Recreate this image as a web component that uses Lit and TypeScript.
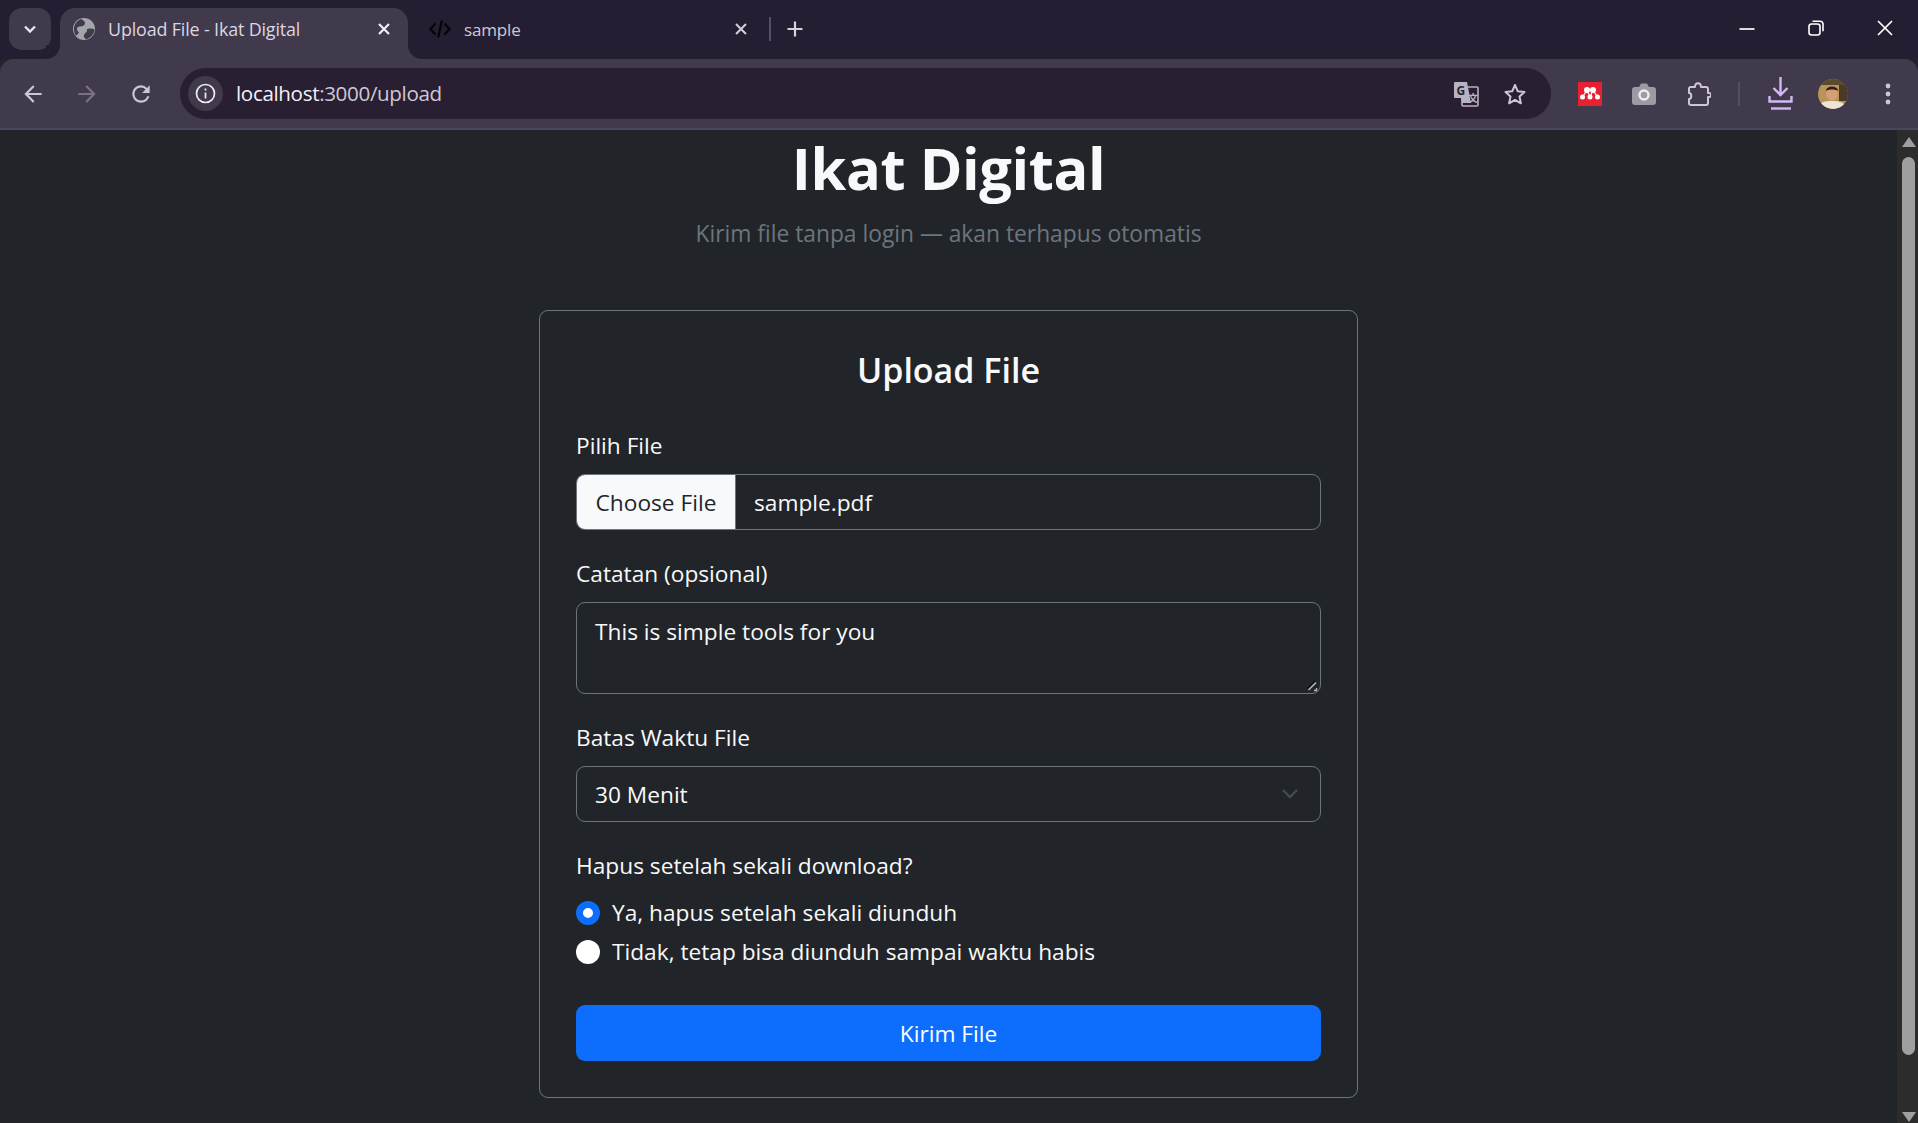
import { LitElement, html, css } from "lit";
import { customElement } from "lit/decorators.js";

const ic = (d: string, fill: string, size = 24) => html`<svg width=${size} height=${size} viewBox="0 0 24 24" fill=${fill}><path d=${d}></path></svg>`;

@customElement("app-root")
export class AppRoot extends LitElement {
  static styles = css`
    :host { display: flex; flex-direction: column; width: 100%; height: 1123px; overflow: hidden; background: #212529; font-family: "Open Sans", "Noto Sans", sans-serif; }
    svg { display: block; flex: none; }
    .strip { height: 59px; flex: none; background: #251d31; display: flex; align-items: flex-start; padding-left: 9px; box-sizing: border-box; color: #e6e1ea; }
    .tabmenu { width: 42px; height: 42px; margin-top: 8px; border-radius: 13px; background: #41394c; display: flex; align-items: center; justify-content: center; }
    .tab { height: 51px; margin-top: 8px; display: flex; align-items: center; box-sizing: border-box; position: relative; font-size: 17.9px; letter-spacing: -0.15px; padding-bottom: 9px; }
    .tab.active { margin-left: 9px; width: 348px; background: #41394c; border-radius: 15px 15px 0 0; padding-left: 13px; color: #dcd6e2; }
    .tab.active::before, .tab.active::after { content: ""; position: absolute; bottom: 0; width: 14px; height: 14px; background: radial-gradient(circle at 0 0, #251d31 13.5px, #41394c 14.5px); }
    .tab.active::before { left: -14px; }
    .tab.active::after { right: -14px; transform: scaleX(-1); transform-origin: center; }
    .tab.active .t { margin-left: 13px; flex: 1; }
    .tab.other { width: 361px; padding-left: 21px; color: #cfc9d6; font-size: 17px; }
    .tab.other .t { margin-left: 13px; flex: 1; }
    .tab.active .x { margin-right: 17px; }
    .tab.other .x { margin-right: 21px; }
    .sep { width: 2px; height: 24px; margin-top: 17px; background: #564e62; }
    .plus { margin: 20px 0 0 15px; }
    .win { margin-left: auto; margin-right: -1px; display: flex; }
    .win div { width: 69px; height: 58px; display: flex; align-items: flex-start; justify-content: center; padding-top: 20px; box-sizing: border-box; }
    .toolbar { height: 69px; flex: none; background: #41394c; border-radius: 14px 14px 0 0; display: flex; align-items: center; box-sizing: border-box; position: relative; }
    .line { height: 2px; flex: none; background: #4d4559; }
    .nav { width: 54px; display: flex; justify-content: center; }
    .nav:first-child { margin-left: 6px; }
    .omni { margin-left: 12px; width: 1371px; height: 51px; border-radius: 26px; background: #281f33; display: flex; align-items: center; box-sizing: border-box; padding-left: 8px; }
    .infob { width: 35px; height: 35px; border-radius: 50%; background: #41394c; display: flex; align-items: center; justify-content: center; }
    .url { margin: 0 0 2px 13px; font-size: 20.6px; letter-spacing: -0.35px; color: #cfc9d6; flex: 1; white-space: nowrap; }
    .url b { font-weight: 400; color: #f4f1f6; }
    .tools { display: flex; align-items: center; }
    .page { flex: 1; min-height: 0; display: flex; }
    .main { flex: 1; min-width: 0; display: flex; flex-direction: column; align-items: center; color: #f8f9fa; font-size: 22.7px; }
    h1 { margin: 4px 0 0; font-size: 57.8px; line-height: 68px; font-weight: 700; letter-spacing: -0.4px; }
    .sub { color: #6c757d; margin-top: 13.5px; line-height: 36px; font-size: 22.8px; }
    .card { margin-top: 58.5px; width: 819px; height: 788px; box-sizing: border-box; border: 1px solid #6c757d; border-radius: 9px; padding: 36px; display: flex; flex-direction: column; }
    h2 { margin: 0; text-align: center; font-size: 34px; line-height: 46px; font-weight: 600; }
    label, .lab { display: block; line-height: 34px; }
    .gap { margin-top: 27px; }
    .field { border: 1px solid #6c757d; border-radius: 9px; box-sizing: border-box; width: 100%; background: transparent; color: #f8f9fa; font: inherit; }
    .file { height: 56px; display: flex; align-items: stretch; margin-top: 11px; overflow: hidden; }
    .choose { width: 158px; background: #f8f9fa; color: #212529; border-right: 1px solid #6c757d; display: flex; align-items: center; justify-content: center; }
    .fname { padding-left: 18px; display: flex; align-items: center; }
    .tawrap { position: relative; margin-top: 11px; }
    textarea.field { display: block; height: 92px; padding: 12px 18px 8px; resize: none; outline: none; line-height: 34px; }
    .grip { position: absolute; right: 3px; bottom: 2px; }
    select.field { display: block; height: 56px; padding: 0 18px; appearance: none; outline: none; }
    option { color: #212529; }
    .selwrap { position: relative; margin-top: 11px; }
    .chev { position: absolute; right: 22px; top: 22px; }
    .radio { display: flex; align-items: center; gap: 12px; height: 39px; }
    .first { margin-top: 10px; }
    .dot { width: 24px; height: 24px; border-radius: 50%; background: #fff; box-sizing: border-box; flex: none; }
    .dot.on { border: 7px solid #0d6efd; }
    .btn { margin-top: 34px; height: 56px; border: 0; border-radius: 9px; background: #0d6efd; color: #fff; font: inherit; flex: none; width: 100%; }
    .sb { width: 21px; flex: none; background: #2c2c2c; display: flex; flex-direction: column; align-items: center; position: relative; }
    .thumb { width: 13px; height: 898px; margin: 10px 0 0 2px; background: #9f9f9f; border-radius: 7px; }
    .arrow-top { margin: 7px 0 0 2px; }
    .arrow-bottom { position: absolute; bottom: 1px; left: 5px; }
    .m24 { margin-right: 24px; }
    .tools > .a { margin-left: 27px; }
    .tools > .b { margin-left: 30px; }
    .tools > .c { margin-left: 31px; }
    .tools > .d { width: 2px; height: 24px; background: #564e62; margin-left: 27px; }
    .tools > .e { margin-left: 28px; }
    .tools > .f { margin-left: 24px; }
    .tools > .g { margin-left: 37px; }
  `;

  render() {
    const white = "#ffffff";
    const soft = "#cdc6d4";
    return html`
      <div class="strip">
        <div class="tabmenu"><svg width="14" height="9" viewBox="0 0 14 9" fill="none" stroke="#e8e3ec" stroke-width="2.4"><path d="M2 1.500l5 5 5-5"></path></svg></div>
        <div class="tab active">
          <svg width="22" height="22" viewBox="0 0 22 22"><circle cx="11" cy="11" r="11" fill="#a2a6ab"></circle><path d="M8 1C11 3 13 4 11.500 6.500 10 9 7 8 5 9 3 10 4 13 6 14.500 5 16 4 17.500 2.800 17.500 0 13-.5 5 8 1zM14 11c2.500-1 5.500-.5 7.500.5C21 16 18 19.500 13 21.500 11 19.500 10 18 11.500 16 13 14.500 14.500 14 14 11z" fill="#41394c"></path></svg>
          <span class="t">Upload File - Ikat Digital</span>
          <svg class="x" width="14" height="14" viewBox="0 0 14 14" stroke="#f1edf4" stroke-width="2.200"><path d="M2 2l10 10M12 2L2 12"></path></svg>
        </div>
        <div class="tab other">
          <svg width="22" height="20" viewBox="0 0 22 20" fill="none" stroke="#050505" stroke-width="2.200"><path d="M6.500 4.500L1.500 10l5 5.500M15.500 4.500l5 5.500-5 5.500M12.800 1.500L9.200 18.500"></path></svg>
          <span class="t">sample</span>
          <svg class="x" width="14" height="14" viewBox="0 0 14 14" stroke="#d4ced9" stroke-width="2"><path d="M2 2l10 10M12 2L2 12"></path></svg>
        </div>
        <div class="sep"></div>
        <div class="plus"><svg width="18" height="18" viewBox="0 0 18 18" stroke="#d8d2dd" stroke-width="2.200"><path d="M9 1.500v15M1.500 9h15"></path></svg></div>
        <div class="win">
          <div><svg width="16" height="18" viewBox="0 0 16 18" stroke=${white} stroke-width="1.700"><path d="M.5 9h15"></path></svg></div>
          <div><svg width="16" height="16" viewBox="0 0 16 16" fill="none" stroke=${white} stroke-width="1.600"><rect x="1" y="4" width="11" height="11" rx="2.500"></rect><path d="M4.500 1.200h7.500a3 3 0 0 1 3 3v7"></path></svg></div>
          <div><svg width="16" height="16" viewBox="0 0 16 16" stroke=${white} stroke-width="1.700"><path d="M1 1l14 14M15 1L1 15"></path></svg></div>
        </div>
      </div>
      <div class="toolbar">
        <div class="nav">${ic("M20 11H7.830l5.590-5.590L12 4l-8 8 8 8 1.410-1.410L7.830 13H20v-2z", soft, 26)}</div>
        <div class="nav">${ic("M12 4l-1.410 1.410L16.170 11H4v2h12.170l-5.580 5.590L12 20l8-8z", "#7a7285", 26)}</div>
        <div class="nav">${ic("M17.650 6.350A7.958 7.958 0 0 0 12 4c-4.420 0-7.990 3.580-7.990 8s3.570 8 7.990 8c3.730 0 6.840-2.550 7.730-6h-2.080A5.990 5.990 0 0 1 12 18c-3.310 0-6-2.690-6-6s2.690-6 6-6c1.660 0 3.140.69 4.220 1.780L13 11h7V4l-2.350 2.350z", soft, 26)}</div>
        <div class="omni">
          <div class="infob"><svg width="21" height="21" viewBox="0 0 21 21" fill="none" stroke="#f1edf4" stroke-width="1.700"><circle cx="10.500" cy="10.500" r="9"></circle><path d="M10.500 9.500v6M10.500 5.500v2"></path></svg></div>
          <div class="url"><b>localhost</b>:3000/upload</div>
          <svg class="m24" width="26" height="26" viewBox="0 0 26 26">
            <rect x="9" y="6" width="16" height="19" rx="1" fill="none" stroke="#b9b2c0" stroke-width="1.600"></rect>
            <path d="M2 1h12l4 21h-9l-1-5H2a1 1 0 0 1-1-1V2a1 1 0 0 1 1-1z" fill="#b9b2c0"></path>
            <text x="3.500" y="14" font-size="12" font-weight="700" font-family="Open Sans" fill="#281f33">G</text>
            <text x="15" y="21" font-size="10" font-weight="700" font-family="Noto Sans CJK SC" fill="#b9b2c0">文</text>
          </svg>
          <svg class="m24" width="24" height="24" viewBox="0 0 24 24" fill="none" stroke="#cdc6d4" stroke-width="2"><path d="M12 3l2.800 6.300 6.700.7-5 4.600 1.400 6.700L12 17.800l-5.900 3.500 1.400-6.700-5-4.600 6.700-.7z" stroke-linejoin="round"></path></svg>
        </div>
        <div class="tools">
          <svg class="a" width="24" height="24" viewBox="0 0 24 24"><rect width="24" height="24" fill="#e8202f"></rect><g fill="#fff"><circle cx="9" cy="8" r="3"></circle><circle cx="15" cy="8" r="3"></circle><circle cx="4.500" cy="15" r="2.500"></circle><circle cx="12" cy="15" r="2.500"></circle><circle cx="19.500" cy="15" r="2.500"></circle></g><path d="M9 8L4.500 15M9 8L12 15M15 8L12 15M15 8L19.500 15" stroke="#fff" stroke-width="1.200"></path></svg>
          <svg class="b" width="24" height="22" viewBox="0 0 24 22"><path d="M3 4h4l2-3.500h6L17 4h4a3 3 0 0 1 3 3v12a3 3 0 0 1-3 3H3a3 3 0 0 1-3-3V7a3 3 0 0 1 3-3z" fill="#9e9aa3"></path><circle cx="12" cy="12" r="4.500" fill="none" stroke="#ededed" stroke-width="2.400"></circle></svg>
          <svg class="c" width="24" height="26" viewBox="0 0 24 26" fill="none" stroke="#cdc6d4" stroke-width="2"><path d="M3 6h5c0-5 6-5 6 0h5a2 2 0 0 1 2 2v4c4-1 4 5 0 4v6a2 2 0 0 1-2 2H4a2 2 0 0 1-2-2v-4c3 0 3-6 0-6V8a2 2 0 0 1 1-2z" stroke-linejoin="round"></path></svg>
          <div class="d"></div>
          <svg class="e" width="26" height="33" viewBox="0 0 26 33" fill="none" stroke="#d4b8f5" stroke-width="2.400"><path d="M12.500 0v17M5.500 11l7 7 7-7M1.500 19v5.500h22V19"></path><path d="M3 31.500h20"></path></svg>
          <svg class="f" width="30" height="30" viewBox="0 0 30 30"><defs><clipPath id="av"><circle cx="15" cy="15" r="15"></circle></clipPath></defs><g clip-path="url(#av)"><rect width="30" height="30" fill="#b89458"></rect><rect x="21" width="9" height="22" fill="#4a3a24"></rect><rect y="0" width="30" height="6" fill="#5b4a30"></rect><ellipse cx="14" cy="14" rx="6" ry="7.500" fill="#d5a077"></ellipse><path d="M8 12c0-6 12-6 12 0-3-2-9-2-12 0z" fill="#2f2218"></path><path d="M0 30c1-8 8-8 14-8s14 1 15 8z" fill="#ece6d6"></path></g></svg>
          <svg class="g" width="6" height="22" viewBox="0 0 6 22" fill="#cdc6d4"><circle cx="3" cy="3" r="2.400"></circle><circle cx="3" cy="11" r="2.400"></circle><circle cx="3" cy="19" r="2.400"></circle></svg>
        </div>
      </div>
      <div class="line"></div>
      <div class="page">
        <div class="main">
          <h1>Ikat Digital</h1>
          <div class="sub">Kirim file tanpa login — akan terhapus otomatis</div>
          <div class="card">
            <h2>Upload File</h2>
            <label style="margin-top:36px">Pilih File</label>
            <div class="field file"><div class="choose">Choose File</div><div class="fname">sample.pdf</div></div>
            <label class="gap">Catatan (opsional)</label>
            <div class="tawrap">
              <textarea class="field" .value=${"This is simple tools for you"}></textarea>
              <svg class="grip" width="12" height="12" viewBox="0 0 12 12" fill="none"><path d="M1.500 8.500L9 1" stroke="#0a0a0a" stroke-width="1.200"></path><path d="M2.500 10L10 2.500" stroke="#b8b8b8" stroke-width="1.600"></path><path d="M8 10.500h2.500V8" stroke="#b8b8b8" stroke-width="1.400"></path></svg>
            </div>
            <label class="gap">Batas Waktu File</label>
            <div class="selwrap">
              <select class="field"><option>30 Menit</option></select>
              <svg class="chev" width="18" height="12" viewBox="0 0 18 12" fill="none" stroke="#454a50" stroke-width="2.400"><path d="M2 2l7 7 7-7"></path></svg>
            </div>
            <div class="lab gap">Hapus setelah sekali download?</div>
            <div class="radio first"><span class="dot on"></span>Ya, hapus setelah sekali diunduh</div>
            <div class="radio"><span class="dot"></span>Tidak, tetap bisa diunduh sampai waktu habis</div>
            <button class="btn">Kirim File</button>
          </div>
        </div>
        <div class="sb">
          <svg class="arrow-top" width="14" height="10" viewBox="0 0 14 10" fill="#9f9f9f"><path d="M7 0L14 10H0z"></path></svg>
          <div class="thumb"></div>
          <svg class="arrow-bottom" width="14" height="10" viewBox="0 0 14 10" fill="#9f9f9f"><path d="M7 10L0 0h14z"></path></svg>
        </div>
      </div>
    `;
  }
}
